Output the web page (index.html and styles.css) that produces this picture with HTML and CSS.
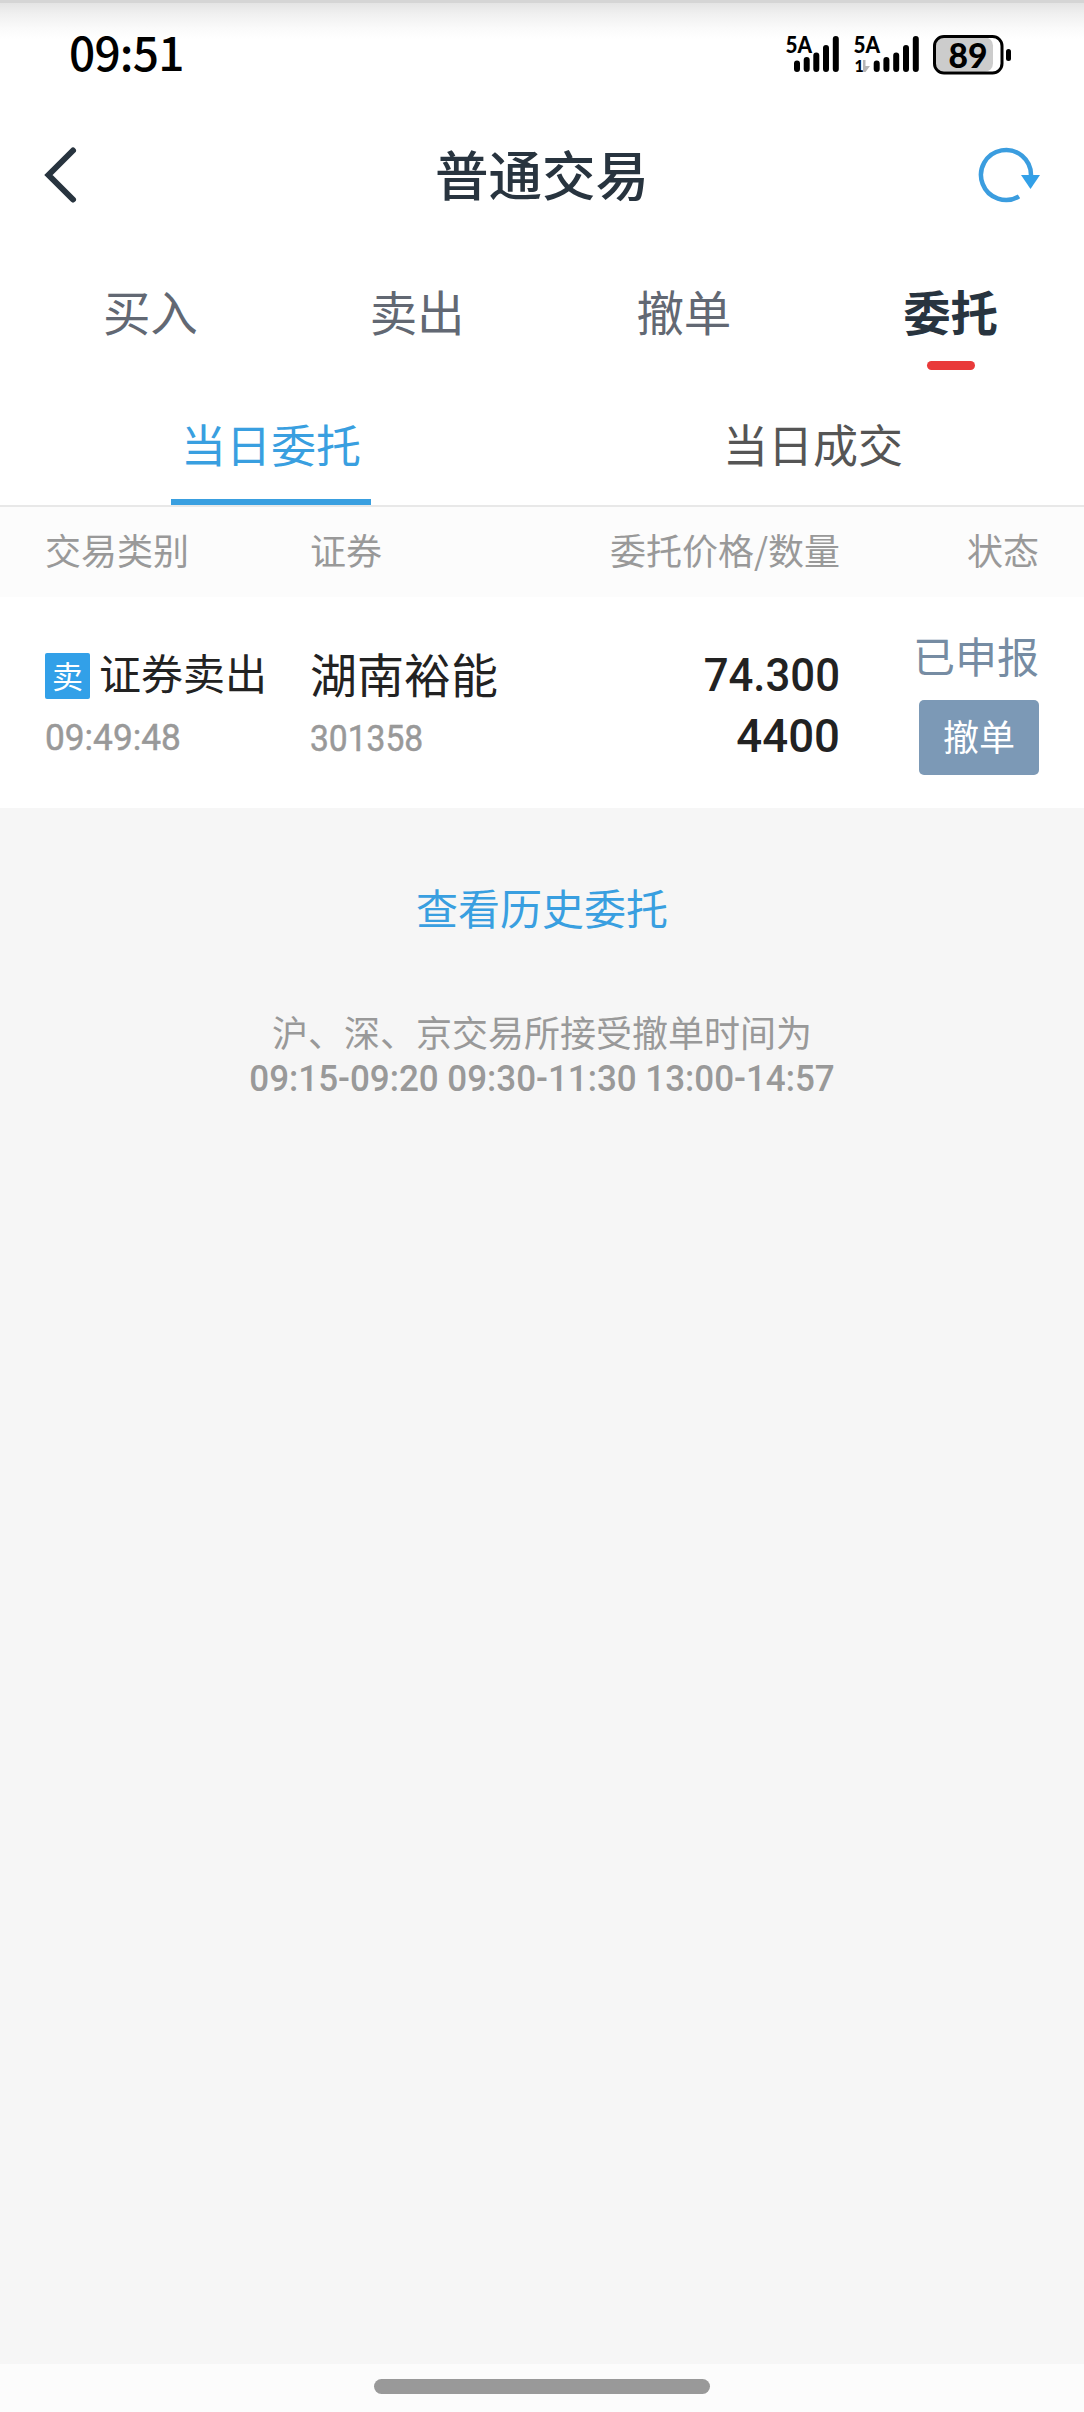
FILE: index.html
```html
<!DOCTYPE html>
<html lang="zh-CN">
<head>
<meta charset="UTF-8">
<meta name="viewport" content="width=device-width, initial-scale=1.0">
<title>普通交易</title>
<link rel="stylesheet" href="styles.css">
</head>
<body>
<div class="page">
  <div class="status-bar">
    <span class="clock">09:51</span>
    <svg class="status-icons" width="232" height="52" viewBox="-4 -6 232 52">
      <!-- SIM 1 -->
      <text class="net" x="-0.5" y="20.500" textLength="26.500" lengthAdjust="spacingAndGlyphs">5A</text>
      <g class="bar">
        <path d="M11 31.500V37M20.700 28V37M30.300 23.500V37M40 16V37M49.800 7V37"/>
      </g>
      <!-- SIM 2 -->
      <text class="net" x="67.500" y="20.500" textLength="26.500" lengthAdjust="spacingAndGlyphs">5A</text>
      <text class="net-sub" x="68.500" y="40">1</text>
      <path fill="#b5b5b5" d="M77 28h2.500v6h4.500l-4.500 6H77z"/>
      <g class="bar">
        <path d="M90.700 31.500V37M100.400 28V37M110.200 23.500V37M120 16V37M129.800 7V37"/>
      </g>
      <!-- battery -->
      <rect x="150" y="5.500" width="57" height="34" rx="8" fill="#ccc"/>
      <rect x="148.500" y="4.500" width="67.500" height="36.500" rx="9.500" fill="none" stroke="#000" stroke-width="3"/>
      <text class="level" x="182" y="35.500" text-anchor="middle" textLength="39" lengthAdjust="spacingAndGlyphs">89</text>
      <rect x="220" y="17" width="5" height="12" rx="2.500"/>
    </svg>
  </div>

  <div class="header">
    <svg class="back" width="40" height="60" viewBox="0 0 40 60">
      <path d="M29 5.500L4.500 30L29 54.500" fill="none" stroke="#28343f" stroke-width="6" stroke-linecap="round" stroke-linejoin="miter"/>
    </svg>
    <h1>普通交易</h1>
    <svg class="refresh" width="62" height="60" viewBox="0 0 62 60">
      <path d="M53 30A25 25 0 1 0 41 51.300" fill="none" stroke="#3b9ddf" stroke-width="4.500"/>
      <path d="M43 30H62L52.500 44z" fill="#32a0e8"/>
    </svg>
  </div>

  <div class="tabs">
    <div class="tab">买入</div>
    <div class="tab">卖出</div>
    <div class="tab">撤单</div>
    <div class="tab active">委托</div>
  </div>

  <div class="sub-tabs">
    <div class="sub-tab active"><span>当日委托</span></div>
    <div class="sub-tab"><span>当日成交</span></div>
  </div>

  <div class="grid list-head">
    <div>交易类别</div>
    <div>证券</div>
    <div class="right">委托价格/数量</div>
    <div class="right">状态</div>
  </div>

  <div class="grid order">
    <div class="type">
      <div class="type-name"><span class="badge">卖</span>证券卖出</div>
      <div class="small"><span class="num time">09:49:48</span></div>
    </div>
    <div class="stock">
      <div class="stock-name">湖南裕能</div>
      <div class="small"><span class="num">301358</span></div>
    </div>
    <div class="price right">
      <span class="num">74.300</span>
      <span class="num amount">4400</span>
    </div>
    <div class="state right">
      <div class="state-text">已申报</div>
      <button class="cancel">撤单</button>
    </div>
  </div>

  <div class="footer">
    <a class="history">查看历史委托</a>
    <p>沪、深、京交易所接受撤单时间为</p>
    <p class="hours"><span class="num">09:15-09:20 09:30-11:30 13:00-14:57</span></p>
  </div>

  <div class="nav-bar"><div class="pill"></div></div>
</div>
</body>
</html>
```
FILE: styles.css
```css
* { box-sizing: border-box; }
body { margin: 0; font-family: 'Noto Sans CJK SC', sans-serif; background-color: #f5f5f5; color: #222; }
.page { display: flex; flex-direction: column; height: 2412px; background: #fff; }
.right { text-align: right; }
.num { display: block; font-family: Roboto, 'Noto Sans CJK SC', sans-serif; white-space: nowrap; transform-origin: left center; }

.status-bar { display: flex; justify-content: space-between; align-items: flex-start; height: 78px; padding: 0 70px 0 69px; border-top: 3px solid #d5d5d5; background: linear-gradient(#e4e4e4, #f0f0f0 11px, #fafafa 25px, #fff 36px); }
.clock { font-size: 46px; font-weight: 500; line-height: 66px; margin-top: 15px; color: #000; letter-spacing: -0.8px; }
.status-icons { margin-top: 23px; }
.net { font: 900 23px Lato, sans-serif; }
.net-sub { font: 900 16px Lato, sans-serif; }
.level { font: 900 34px Lato, sans-serif; }
.bar { stroke: #000; stroke-width: 6; stroke-linecap: round; }

.header { display: flex; justify-content: space-between; align-items: center; height: 186px; padding: 8px 44px 0 44px; }
.header h1 { margin: -4px 0 0 22px; font-size: 53.5px; font-weight: 500; line-height: 80px; color: #28343f; }

.tabs { display: flex; height: 126px; padding-left: 17px; }
.tab { flex: 1; font-size: 47.5px; line-height: 93px; text-align: center; color: #626873; }
.tab.active { font-weight: 700; color: #28343f; }
.tab.active::after { content: ''; display: block; width: 48px; height: 9px; margin: 4px auto 0; border-radius: 5px; background: #e93a3a; }

.sub-tabs { display: flex; height: 117px; border-bottom: 2px solid #e8e8e8; }
.sub-tab { display: flex; justify-content: center; flex: 1; font-size: 45px; line-height: 107px; color: #555; }
.sub-tab span { width: 200px; height: 115px; text-align: center; }
.sub-tab.active span { color: #399fe0; border-bottom: 6px solid #399fe0; }

.grid { display: grid; grid-template-columns: 265px 200px 330px 199px; padding: 0 45px; }
.list-head { height: 90px; font-size: 36px; line-height: 84px; color: #999; background: #fcfcfc; }

.order { height: 211px; }
.type-name { display: flex; align-items: center; gap: 9px; height: 46px; margin-top: 52px; font-size: 42px; line-height: 46px; white-space: nowrap; }
.badge { width: 45px; height: 46px; margin-top: 8px; border-radius: 2px; font-size: 31px; line-height: 43px; text-align: center; color: #fff; background: #32a0e8; }
.small { margin-top: 21px; font-size: 36.5px; line-height: 44px; color: #999; }
.small .num { transform: scaleX(0.92); -webkit-text-stroke: 0.5px #999; }
.small .time { transform: scaleX(0.965); }
.stock-name { height: 48px; margin-top: 51px; font-size: 47px; line-height: 50px; }
.price { padding-top: 47px; font-size: 47px; font-weight: 500; line-height: 61px; }
.price .num { transform: scaleX(0.93); transform-origin: right center; }
.price .amount { transform: scaleX(0.97); }
.state-text { margin-top: 33px; font-size: 42px; line-height: 50px; color: #768ca3; }
.cancel { width: 120px; height: 75px; margin-top: 20px; padding: 0 0 4px; border: none; border-radius: 5px; font-family: inherit; font-size: 36px; line-height: 71px; color: #fff; background: #7c99b6; }

.footer { flex: 1; background: #f6f6f6; text-align: center; color: #999; font-size: 36px; }
.history { display: block; margin: 69px 0 70px; font-size: 42px; line-height: 60px; color: #399fe0; }
.footer p { margin: 0; line-height: 48px; }
.footer .hours { font-size: 37px; font-weight: 500; }
.hours .num { transform: scaleX(0.945); transform-origin: center; }

.nav-bar { height: 48px; padding-top: 15px; background: #fcfcfc; }
.pill { width: 336px; height: 15px; margin: 0 auto; border-radius: 8px; background: #999; }
```
